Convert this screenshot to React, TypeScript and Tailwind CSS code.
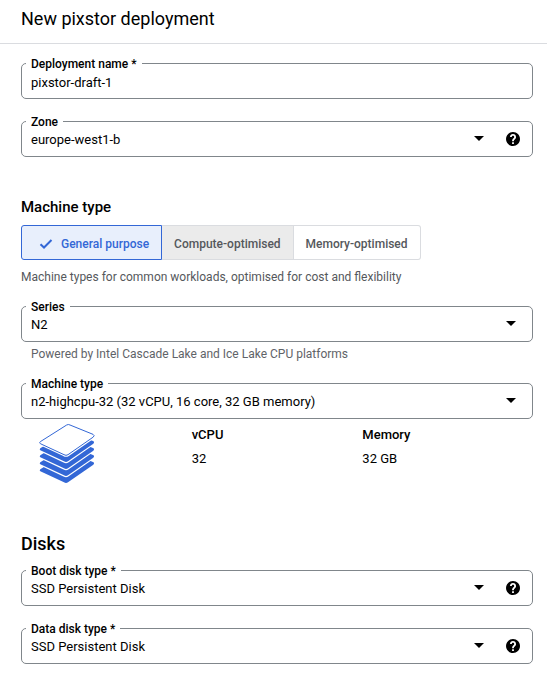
import { useState } from "react";
import type { ReactNode } from "react";

const MACHINE_FAMILIES = ["General purpose", "Compute-optimised", "Memory-optimised"];

const label = "absolute -top-[7px] left-[5px] bg-white px-[5px] text-[12px] leading-4 font-medium";
const control =
  "block h-9 w-full appearance-none rounded-[5px] border border-[#80868b] bg-white pt-[2px] pl-[9px] text-[13px] text-black outline-none focus:border-[#3367d6]";

function HelpIcon() {
  return (
    <svg viewBox="2 2 20 20" className="h-[14px] w-[14px]" fill="currentColor" aria-hidden="true">
      <path d="M12 2C6.48 2 2 6.48 2 12s4.48 10 10 10 10-4.48 10-10S17.52 2 12 2zm1.3 17.2h-2.6v-2.6h2.6v2.6zm2.4-7.9l-.9.92C13.9 13 13.3 13.6 13.3 15.1h-2.6v-.6c0-1.1.45-2.1 1.17-2.83l1.24-1.26c.37-.36.59-.86.59-1.41 0-1.1-.7-1.7-1.7-1.7s-1.7.7-1.7 1.8H7.7c0-2.4 1.9-4.2 4.3-4.2s4.3 1.8 4.3 4.1c0 .88-.2 1.7-.6 2.3z" />
    </svg>
  );
}

function CaretIcon() {
  return (
    <svg viewBox="0 0 10 5" className="h-[5px] w-[10px]" fill="currentColor" aria-hidden="true">
      <path d="M0 0h10L5 5z" />
    </svg>
  );
}

const PLATE = "M13 59L92 9Q97 6 102 9L171 37Q177 40 172 45L96 98Q90 102 84 98L13 65Q9 62 13 59Z";

// Stack of plates: an open sheet on top of four solid ones
function StackIcon() {
  return (
    <svg viewBox="0 0 186 192" className="mt-[3px] ml-[15px] h-16 w-[62px]" aria-hidden="true">
      {[83, 62, 41, 20].map((y) => (
        <g key={y} transform={`translate(0 ${y})`}>
          <path d={PLATE} fill="#fff" stroke="#fff" strokeWidth="7" />
          <path d={PLATE} fill="#3367d6" />
        </g>
      ))}
      <path d={PLATE} fill="#fff" stroke="#fff" strokeWidth="9" />
      <path d={PLATE} fill="#fff" stroke="#3367d6" strokeWidth="3" />
    </svg>
  );
}

interface SelectFieldProps {
  id: string;
  title: string;
  options: string[];
  help?: boolean;
  hint?: ReactNode;
}

function SelectField({ id, title, options, help, hint }: SelectFieldProps) {
  return (
    <div>
      <div className="relative">
        <select id={id} className={`${control} pr-16`} aria-describedby={hint ? `${id}-hint` : undefined}>
          {options.map((o) => (
            <option key={o}>{o}</option>
          ))}
        </select>
        <label htmlFor={id} className={label}>
          {title}
        </label>
        <div className="pointer-events-none absolute inset-y-0 right-0 flex items-center gap-[22px] pr-[13px] pb-px">
          <span className={help ? "" : "pr-1"}>
            <CaretIcon />
          </span>
          {help && (
            <button type="button" aria-label={`Help: ${title}`} className="pointer-events-auto">
              <HelpIcon />
            </button>
          )}
        </div>
      </div>
      {hint && (
        <p id={`${id}-hint`} className="mt-1 pl-[10px] text-[12px] leading-4 text-[#5f6368]">
          {hint}
        </p>
      )}
    </div>
  );
}

export default function App() {
  const [family, setFamily] = useState(MACHINE_FAMILIES[0]);
  const [name, setName] = useState("pixstor-draft-1");

  return (
    <div className="min-h-screen bg-white font-[Roboto,sans-serif] text-black">
      <header className="border-b border-[#dadce0] pt-[7px] pb-3 pl-[21px]">
        <h1 className="text-[18px] leading-6">New pixstor deployment</h1>
      </header>

      <form className="pt-[19px] pr-[14px] pb-9 pl-[21px]" onSubmit={(e) => e.preventDefault()}>
        <div className="flex flex-col gap-[22px]">
          <div className="relative">
            <input id="name" className={control} value={name} onChange={(e) => setName(e.target.value)} />
            <label htmlFor="name" className={label}>
              Deployment name *
            </label>
          </div>
          <SelectField id="zone" title="Zone" options={["europe-west1-b"]} help />
        </div>

        <section className="mt-[38px]">
          <h2 className="text-[15px] leading-6 font-medium">Machine type</h2>
          <div className="mt-[6px] flex" role="group" aria-label="Machine family">
            {MACHINE_FAMILIES.map((f, i) => {
              const selected = f === family;
              return (
                <button
                  key={f}
                  type="button"
                  aria-pressed={selected}
                  onClick={() => setFamily(f)}
                  className={[
                    "flex h-[35px] items-center border-y border-r px-3 pt-[2px] text-[12px] font-medium first:rounded-l-[3px] first:border-l last:rounded-r-[3px]",
                    selected
                      ? "border-[#3367d6] bg-[#e8effc] pl-[17px] text-[#3367d6]"
                      : "border-[#dadce0] text-[#55585c]",
                    !selected && i === 1 ? "bg-[#ebebeb]" : "",
                  ].join(" ")}
                >
                  {selected && (
                    <svg viewBox="0 0 14 12" className="mr-2 h-3 w-[14px]" fill="none" aria-hidden="true">
                      <path d="M1.500 6.200L5 9.500L12.500 2" stroke="currentColor" strokeWidth="2" />
                    </svg>
                  )}
                  {f}
                </button>
              );
            })}
          </div>
          <p className="mt-[9px] text-[12px] leading-4 text-[#55585c]">
            Machine types for common workloads, optimised for cost and flexibility
          </p>

          <div className="mt-[21px] flex flex-col gap-[21px]">
            <SelectField
              id="series"
              title="Series"
              options={["N2"]}
              hint="Powered by Intel Cascade Lake and Ice Lake CPU platforms"
            />
            <SelectField
              id="machine-type"
              title="Machine type"
              options={["n2-highcpu-32 (32 vCPU, 16 core, 32 GB memory)"]}
            />
          </div>

          <div className="grid grid-cols-3 text-[13px] leading-4">
            <StackIcon />
            <dl className="flex flex-col gap-2 pt-2">
              <dt className="font-medium">vCPU</dt>
              <dd>32</dd>
            </dl>
            <dl className="flex flex-col gap-2 pt-2">
              <dt className="font-medium">Memory</dt>
              <dd>32 GB</dd>
            </dl>
          </div>
        </section>

        <section className="mt-[46px]">
          <h2 className="text-[18px] leading-6 font-medium">Disks</h2>
          <div className="mt-[14px] flex flex-col gap-[22px]">
            <SelectField id="boot-disk" title="Boot disk type *" options={["SSD Persistent Disk"]} help />
            <SelectField id="data-disk" title="Data disk type *" options={["SSD Persistent Disk"]} help />
          </div>
        </section>
      </form>
    </div>
  );
}
